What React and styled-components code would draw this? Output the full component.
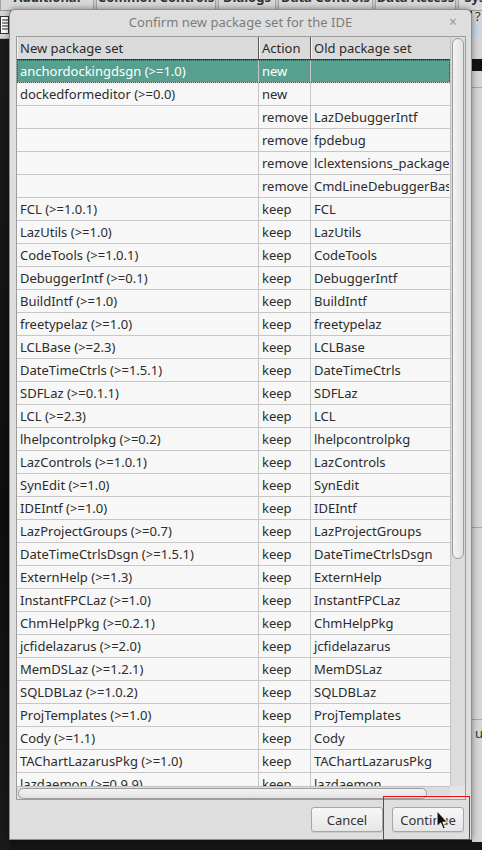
import React from 'react';
import styled, { createGlobalStyle } from 'styled-components';

const Global = createGlobalStyle`
  html, body { margin: 0; padding: 0; }
  body {
    width: 482px; height: 850px; overflow: hidden;
    background: #151515;
    font-family: "Noto Sans", "DejaVu Sans", sans-serif;
  }
`;

const Page = styled.div`
  position: relative;
  width: 482px;
  height: 850px;
  display: flex;
  flex-direction: column;
  overflow: hidden;
`;

const TabStrip = styled.div`
  height: 10px;
  display: flex;
  gap: 2px;
  background: #c8c8c8;
  border-bottom: 1px solid #9a9a9a;
  overflow: hidden;
  flex: none;
`;

const Tab = styled.div`
  width: ${p => p.$w}px;
  flex: none;
  background: #d8d8d8;
  border-left: 1px solid #a4a4a4;
  border-right: 1px solid #a4a4a4;
  box-sizing: border-box;
  overflow: hidden;
  display: flex;
  justify-content: center;
`;

const TabLabel = styled.span`
  margin-top: -11px;
  font-size: 13px;
  font-weight: 700;
  line-height: 16px;
  color: #333;
  white-space: nowrap;
`;

const Workspace = styled.div`
  flex: 1;
  display: flex;
`;

const LeftPanel = styled.div`
  width: 10px;
  display: flex;
  flex-direction: column;
  background: linear-gradient(160deg, #1c1c1c, #0e0e0e 60%, #1a1a1a);
`;

const ToolStrip = styled.div`
  height: 27px;
  background: #d4d4d4;
  border-bottom: 1px solid #aaa;
  display: flex;
  align-items: center;
`;

const Middle = styled.div`
  flex: 1;
  background: #151515;
`;

const RightPanel = styled.div`
  width: 10px;
  height: 831px;
  background: #d6d6d6;
  display: flex;
  flex-direction: column;
`;

const RightBit = styled.div`
  height: ${p => p.$h}px;
  margin-top: ${p => p.$mt || 0}px;
  background: ${p => p.$bg || 'transparent'};
  border-top: ${p => (p.$line ? '1px solid #a8a8a8' : 'none')};
  font-size: 13px;
  color: #333;
  line-height: ${p => p.$h}px;
  overflow: hidden;
  padding-left: 3px;
  box-sizing: border-box;
`;

const Dialog = styled.div`
  position: absolute;
  left: 9px;
  top: 9px;
  width: 463px;
  height: 831px;
  box-sizing: border-box;
  border: 1px solid #8e8e8e;
  border-radius: 6px 6px 0 0;
  background: #dedede;
  display: flex;
  flex-direction: column;
  box-shadow: 0 0 6px rgba(0,0,0,0.45);
`;

const TitleBar = styled.div`
  height: 23px;
  flex: none;
  display: grid;
  grid-template-columns: 1fr auto 1fr;
  align-items: center;
`;

const Title = styled.div`
  font-size: 13px;
  color: #7c7c7c;
  white-space: nowrap;
`;

const Close = styled.div`
  justify-self: end;
  padding-right: 14px;
  font-size: 14px;
  color: #9a9a9a;
  line-height: 14px;
`;

const Body = styled.div`
  flex: 1;
  padding: 3px 5px 0 6px;
  display: flex;
  flex-direction: column;
`;

const Grid = styled.div`
  width: 450px;
  height: 764px;
  box-sizing: border-box;
  border: 1px solid #9c9c9c;
  display: grid;
  grid-template-columns: 1fr 15px;
  grid-template-rows: 1fr 13px;
  background: #f7f7f7;
`;

const TableArea = styled.div`
  overflow: hidden;
  display: flex;
  flex-direction: column;
`;

const cols = '242px 52px 139px';

const HeaderRow = styled.div`
  display: grid;
  grid-template-columns: ${cols};
  height: 23px;
  flex: none;
  background: #dadada;
  border-bottom: 1px solid #3c3c3c;
  box-sizing: border-box;
`;

const HeaderCell = styled.div`
  font-size: 13px;
  color: #2a2a2a;
  line-height: 22px;
  padding-left: 3px;
  border-right: 1px solid ${p => (p.$last ? 'transparent' : '#5a5a5a')};
  box-shadow: inset 1px 0 #f2f2f2;
  white-space: nowrap;
  overflow: hidden;
`;

const Row = styled.div`
  display: grid;
  grid-template-columns: ${cols};
  height: 23px;
  flex: none;
  box-sizing: border-box;
  border-bottom: 1px solid #c6c6c6;
  background: ${p => (p.$selected ? '#57a08f' : '#f7f7f7')};
  color: ${p => (p.$selected ? '#fff' : '#2c2c2c')};
  outline: ${p => (p.$selected ? '1px dotted #d0101a' : 'none')};
  outline-offset: -1px;
`;

const Cell = styled.div`
  font-size: 13px;
  line-height: 22px;
  padding-left: 3px;
  border-right: 1px solid ${p => (p.$last ? 'transparent' : '#c6c6c6')};
  white-space: nowrap;
  overflow: hidden;
`;

const VTrack = styled.div`
  background: #dcdcdc;
  border-left: 1px solid #c2c2c2;
  padding: 1px 1px 0 1px;
`;

const VThumb = styled.div`
  height: 521px;
  box-sizing: border-box;
  border: 1px solid #9c9c9c;
  border-radius: 6px;
  background: linear-gradient(to right, #f3f3f3, #e2e2e2);
`;

const HTrack = styled.div`
  background: #dcdcdc;
  border-top: 1px solid #c2c2c2;
  padding: 0 1px;
  display: flex;
  align-items: center;
`;

const HThumb = styled.div`
  width: 409px;
  height: 11px;
  box-sizing: border-box;
  border: 1px solid #9c9c9c;
  border-radius: 6px;
  background: linear-gradient(to bottom, #f3f3f3, #e2e2e2);
`;

const Corner = styled.div`
  background: #e4e4e4;
`;

const Footer = styled.div`
  height: 39px;
  flex: none;
  display: flex;
  align-items: center;
  justify-content: flex-end;
  gap: 9px;
  padding-right: 7px;
`;

const Button = styled.button`
  width: 72px;
  height: 25px;
  box-sizing: border-box;
  border: 1px solid #a6a6a6;
  border-radius: 3px;
  background: linear-gradient(#f7f7f7, #e6e6e6);
  font-family: "Noto Sans", "DejaVu Sans", sans-serif;
  font-size: 13px;
  color: #333;
  padding: 0;
  box-shadow: 0 1px 0 rgba(0,0,0,0.08);
`;

const Highlight = styled.div`
  position: absolute;
  left: 383px;
  top: 796px;
  width: 87px;
  height: 44px;
  box-sizing: border-box;
  border: 1px solid #ea1018;
  pointer-events: none;
  z-index: 2;
`;

const Cursor = styled.svg`
  position: absolute;
  left: 436px;
  top: 810px;
  z-index: 3;
`;

const tabs = [
  ['Additional', 94],
  ['Common Controls', 120],
  ['Dialogs', 58],
  ['Data Controls', 95],
  ['Data Access', 81],
  ['System', 60],
];

const rows = [
  ['anchordockingdsgn (>=1.0)', 'new', ''],
  ['dockedformeditor (>=0.0)', 'new', ''],
  ['', 'remove', 'LazDebuggerIntf'],
  ['', 'remove', 'fpdebug'],
  ['', 'remove', 'lclextensions_package'],
  ['', 'remove', 'CmdLineDebuggerBase'],
  ['FCL (>=1.0.1)', 'keep', 'FCL'],
  ['LazUtils (>=1.0)', 'keep', 'LazUtils'],
  ['CodeTools (>=1.0.1)', 'keep', 'CodeTools'],
  ['DebuggerIntf (>=0.1)', 'keep', 'DebuggerIntf'],
  ['BuildIntf (>=1.0)', 'keep', 'BuildIntf'],
  ['freetypelaz (>=1.0)', 'keep', 'freetypelaz'],
  ['LCLBase (>=2.3)', 'keep', 'LCLBase'],
  ['DateTimeCtrls (>=1.5.1)', 'keep', 'DateTimeCtrls'],
  ['SDFLaz (>=0.1.1)', 'keep', 'SDFLaz'],
  ['LCL (>=2.3)', 'keep', 'LCL'],
  ['lhelpcontrolpkg (>=0.2)', 'keep', 'lhelpcontrolpkg'],
  ['LazControls (>=1.0.1)', 'keep', 'LazControls'],
  ['SynEdit (>=1.0)', 'keep', 'SynEdit'],
  ['IDEIntf (>=1.0)', 'keep', 'IDEIntf'],
  ['LazProjectGroups (>=0.7)', 'keep', 'LazProjectGroups'],
  ['DateTimeCtrlsDsgn (>=1.5.1)', 'keep', 'DateTimeCtrlsDsgn'],
  ['ExternHelp (>=1.3)', 'keep', 'ExternHelp'],
  ['InstantFPCLaz (>=1.0)', 'keep', 'InstantFPCLaz'],
  ['ChmHelpPkg (>=0.2.1)', 'keep', 'ChmHelpPkg'],
  ['jcfidelazarus (>=2.0)', 'keep', 'jcfidelazarus'],
  ['MemDSLaz (>=1.2.1)', 'keep', 'MemDSLaz'],
  ['SQLDBLaz (>=1.0.2)', 'keep', 'SQLDBLaz'],
  ['ProjTemplates (>=1.0)', 'keep', 'ProjTemplates'],
  ['Cody (>=1.1)', 'keep', 'Cody'],
  ['TAChartLazarusPkg (>=1.0)', 'keep', 'TAChartLazarusPkg'],
  ['lazdaemon (>=0.9.9)', 'keep', 'lazdaemon'],
];

export default function App() {
  return (
    <>
      <Global />
      <Page>
        <TabStrip>
          {tabs.map(([t, w]) => (
            <Tab key={t} $w={w}><TabLabel>{t}</TabLabel></Tab>
          ))}
        </TabStrip>
        <Workspace>
          <LeftPanel>
            <ToolStrip>
              <svg width="9" height="18" viewBox="0 0 9 18">
                <rect x="0.5" y="0.5" width="8" height="17" fill="#fff" stroke="#333" />
                <path d="M2 4h6M2 7h6M2 10h6M2 13h6" stroke="#222" strokeWidth="1" />
              </svg>
            </ToolStrip>
          </LeftPanel>
          <Middle />
          <RightPanel>
            <RightBit $h={10}>?</RightBit>
            <RightBit $h={14} $bg="#c9d6e6" />
            <RightBit $h={12} $mt={24} $bg="#111" />
            <RightBit $h={20} $mt={16} $line />
            <RightBit $h={22} $mt={420} $line />
            <RightBit $h={26} $mt={170} $line>u</RightBit>
          </RightPanel>
        </Workspace>

        <Dialog>
          <TitleBar>
            <span />
            <Title>Confirm new package set for the IDE</Title>
            <Close>×</Close>
          </TitleBar>
          <Body>
            <Grid>
              <TableArea>
                <HeaderRow>
                  <HeaderCell>New package set</HeaderCell>
                  <HeaderCell>Action</HeaderCell>
                  <HeaderCell $last>Old package set</HeaderCell>
                </HeaderRow>
                {rows.map((r, i) => (
                  <Row key={i} $selected={i === 0}>
                    <Cell>{r[0]}</Cell>
                    <Cell>{r[1]}</Cell>
                    <Cell $last>{r[2]}</Cell>
                  </Row>
                ))}
              </TableArea>
              <VTrack><VThumb /></VTrack>
              <HTrack><HThumb /></HTrack>
              <Corner />
            </Grid>
          </Body>
          <Footer>
            <Button>Cancel</Button>
            <Button>Continue</Button>
          </Footer>
        </Dialog>

        <Highlight />
        <Cursor width="13" height="21" viewBox="0 0 13 21">
          <path d="M1 1 L1 16.5 L4.6 13 L7.2 19 L9.4 18 L6.8 12.2 L11.5 12.2 Z" fill="#111" stroke="#fff" strokeWidth="1" strokeLinejoin="round" />
        </Cursor>
      </Page>
    </>
  );
}
